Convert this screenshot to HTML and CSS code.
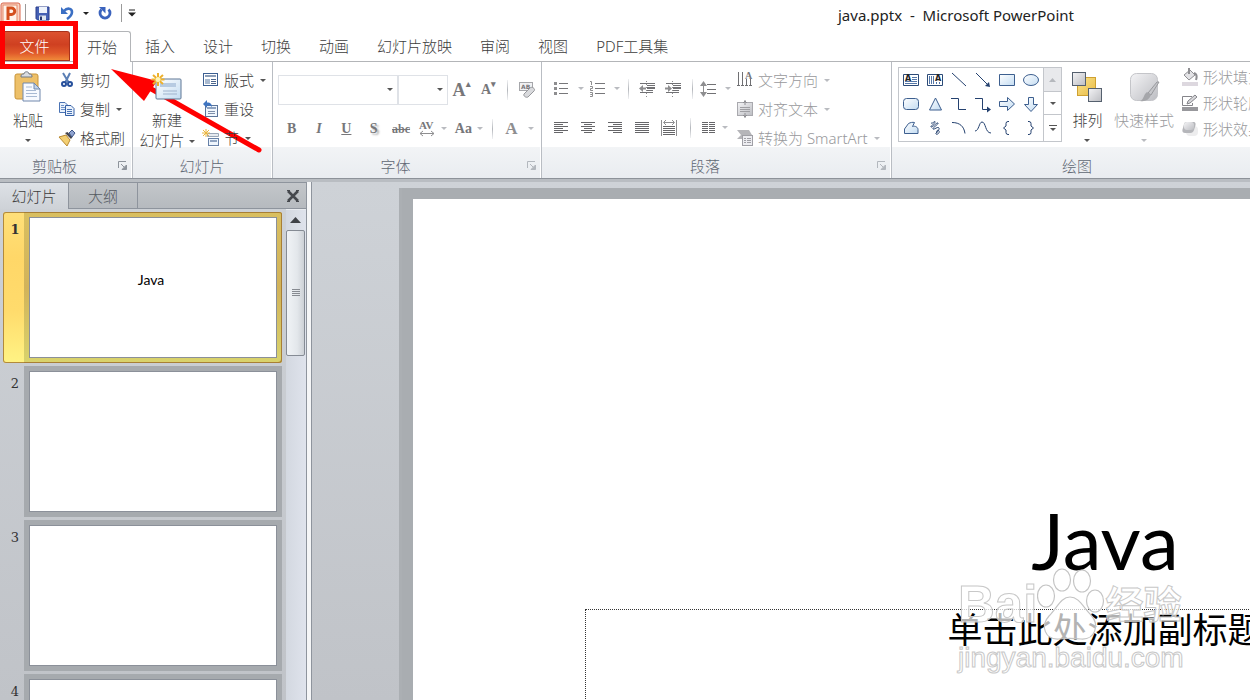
FILE: index.html
```
<!DOCTYPE html>
<html lang="zh-CN">
<head>
    <meta charset="UTF-8">
    <meta name="viewport" content="width=device-width, initial-scale=1.0">
    <title>java.pptx - Microsoft PowerPoint</title>
    <link rel="stylesheet" href="styles.css">
</head>
<body>
    <!-- shared gradients -->
    <svg class="defs" width="0" height="0" aria-hidden="true">
        <defs>
            <linearGradient id="blueFill" x1="0" y1="0" x2="1" y2="1"><stop offset="0" stop-color="#fff"/><stop offset="1" stop-color="#c3dcf2"/></linearGradient>
            <linearGradient id="greyFill" x1="0" y1="0" x2="1" y2="1"><stop offset="0" stop-color="#f4f4f6"/><stop offset="1" stop-color="#bcbdc2"/></linearGradient>
            <linearGradient id="goldFill" x1="0" y1="0" x2="1" y2="1"><stop offset="0" stop-color="#fbe48c"/><stop offset="1" stop-color="#e8ba45"/></linearGradient>
        </defs>
    </svg>

    <header class="titlebar">
        <div class="quick">
            <svg width="21" height="22" viewBox="0 0 21 22"><rect x="1" y="1" width="19" height="20" rx="2" fill="#f9d5c4" stroke="#d9654a"/><rect x="3" y="3" width="14" height="17" fill="#fff3ea" stroke="#e58a68"/><path d="M8 18V6h3.500a3.200 3.200 0 0 1 0 6.500H8" fill="none" stroke="#d4501e" stroke-width="3"/></svg>
            <span class="bar"></span>
            <button class="icon" aria-label="保存"><svg width="15" height="15" viewBox="0 0 15 15"><path d="M1 1h13v13H2.500L1 12.500z" fill="#4560b4" stroke="#2b3f8c"/><path d="M4 1h8v6H4z" fill="#eef3fb"/><path d="M4 9.500h7V14H4z" fill="#dfe5ee"/><path d="M5 10.500h2V14H5z" fill="#26366e"/></svg></button>
            <button class="icon undo" aria-label="撤消"><svg width="14" height="14" viewBox="0 0 14 14"><path d="M0 1v7h7z" fill="#3b6fc4"/><path d="M3 5C6 1.500 11 2 11 6c0 3-2 5-5 7" fill="none" stroke="#3b6fc4" stroke-width="2.600"/></svg><i class="caret dark"></i></button>
            <button class="icon" aria-label="恢复"><svg width="14" height="14" viewBox="0 0 14 14"><path d="M10.500 3.500a5 5 0 1 1-7 0" fill="none" stroke="#3b63bd" stroke-width="2.800"/><path d="M1 1h6.500v6.500z" fill="#3b63bd"/></svg></button>
            <span class="bar"></span>
            <button class="icon" aria-label="自定义快速访问工具栏"><svg width="8" height="8" viewBox="0 0 8 8"><path d="M1 1h6" stroke="#222"/><path d="M0 3.500h8L4 7.500z" fill="#222"/></svg></button>
        </div>
        <h1>java.pptx&nbsp; -&nbsp; Microsoft PowerPoint</h1>
    </header>

    <nav class="tabs">
        <button class="file">文件</button>
        <button class="tab active">开始</button>
        <button class="tab">插入</button>
        <button class="tab">设计</button>
        <button class="tab">切换</button>
        <button class="tab">动画</button>
        <button class="tab">幻灯片放映</button>
        <button class="tab">审阅</button>
        <button class="tab">视图</button>
        <button class="tab">PDF工具集</button>
    </nav>

    <div class="ribbon">
        <section class="group clipboard">
            <div class="tools">
                <button class="big">
                    <svg width="28" height="32" viewBox="0 0 28 32"><rect x="1" y="3" width="23" height="25" rx="2" fill="#edc069" stroke="#c9953b"/><path d="M7 5c0-2 2-2 3-2 0-3 5-3 5 0 1 0 3 0 3 2v1H7z" fill="#d9dce0" stroke="#737a84"/><path d="M9 12h11l6 6v12H9z" fill="#f7faff" stroke="#7088ac"/><path d="M20 12v6h6z" fill="#c2d3ea" stroke="#7088ac"/><path d="M12 16h6M12 19.500h10M12 22.500h11M12 25.500h11" stroke="#a8bad3"/></svg>
                    <span>粘贴</span><i class="caret"></i>
                </button>
                <div class="stack">
                    <button class="small"><svg width="18" height="18" viewBox="0 0 18 18"><path d="M5 2l6 10M12 2L7 12" stroke="#5b7fb5" stroke-width="2"/><circle cx="6" cy="13" r="2" fill="none" stroke="#27509c" stroke-width="2"/><circle cx="12" cy="13" r="2" fill="none" stroke="#27509c" stroke-width="2"/></svg>剪切</button>
                    <button class="small"><svg width="18" height="18" viewBox="0 0 18 18"><path d="M1.500 2.500H7l3 3v7H1.500z" fill="#eaf2fc" stroke="#4a73b4"/><path d="M3 5.500h3M3 7.500h4M3 9.500h4" stroke="#6e92c8"/><path d="M7.500 5.500H13l3 3v7H7.500z" fill="#eaf2fc" stroke="#345fa5"/><path d="M9 9.500h5M9 11.500h5M9 13.500h5" stroke="#4a73b4"/></svg>复制<i class="caret"></i></button>
                    <button class="small"><svg width="18" height="18" viewBox="0 0 18 18"><path d="M1 8l7-2 4 5-3 6z" fill="#f3cf72" stroke="#b98a32"/><path d="M7 4l6 6 1.500-2-5-5z" fill="#45454c"/><path d="M11 4l3-3 3 3-3 4z" fill="#8fa3d0" stroke="#3f5689"/></svg>格式刷</button>
                </div>
            </div>
            <footer>剪贴板<button class="launcher" aria-label="剪贴板选项"><svg width="9" height="9" viewBox="0 0 9 9"><path d="M.5 7V.5H8M3 3l3 3" fill="none" stroke="#8d939b"/><path d="M8.500 4v4.500H4z" fill="#8d939b" stroke="#8d939b"/></svg></button></footer>
        </section>

        <section class="group slides">
            <div class="tools">
                <button class="big">
                    <svg width="32" height="32" viewBox="0 0 32 32"><rect x="5" y="8" width="25" height="20" rx="1" fill="url(#blueFill)" stroke="#5f7795"/><path d="M9 12h16v4H9z" fill="#b7cbe2"/><path d="M12 20h14M12 23h14" stroke="#9fb3cd"/><path d="M7 2v13M.5 8.500h13M2 4l10 9M12 4L2 13" stroke="#eeb12c" stroke-width="2"/><circle cx="7" cy="8.500" r="2.500" fill="#fff4b5"/></svg>
                    <span>新建</span><span>幻灯片<i class="caret"></i></span>
                </button>
                <div class="stack">
                    <button class="small"><svg width="18" height="18" viewBox="0 0 18 18"><rect x="1.500" y="2.500" width="14" height="12" fill="#fff" stroke="#3c5f92"/><path d="M3 5h11" stroke="#8b9db7" stroke-width="2"/><path d="M3 8h5v5H3z" fill="#a9bad0"/><path d="M9 8.500h5M9 10.500h5M9 12.500h5" stroke="#4c668c"/></svg>版式<i class="caret"></i></button>
                    <button class="small"><svg width="18" height="18" viewBox="0 0 18 18"><rect x="3.500" y="5.500" width="12" height="11" fill="#f0f6fd" stroke="#5b7499"/><path d="M5 8h9" stroke="#8fa3c0" stroke-width="2"/><path d="M6 11.500h7M6 13.500h7" stroke="#7e8fab"/><path d="M1 4l4-4v2.500c4 0 5 2 5 5-1-2-2-2-5-2V8z" fill="#3f75c1"/></svg>重设</button>
                    <button class="small"><svg width="18" height="18" viewBox="0 0 18 18"><path d="M5.500 4.500h11v3h-11z" fill="#e6eaf0" stroke="#9aa6b7"/><rect x="6.500" y="9.500" width="10" height="7" fill="#eef5fd" stroke="#6781a8"/><path d="M8 12h7" stroke="#8fa3c0" stroke-width="2"/><path d="M4 0v8M0 4h8M1 1l6 6M7 1L1 7" stroke="#ecb63c"/></svg>节<i class="caret"></i></button>
                </div>
            </div>
            <footer>幻灯片</footer>
        </section>

        <section class="group font">
            <div class="tools">
                <div class="row">
                    <select class="family" aria-label="字体"><option></option></select>
                    <select class="size" aria-label="字号"><option></option></select>
                    <button class="glyph grow" aria-label="增大字号">A<sup>▴</sup></button>
                    <button class="glyph shrink" aria-label="减小字号">A<sup>▾</sup></button>
                    <span class="sep"></span>
                    <button class="glyph" aria-label="清除格式"><svg width="18" height="18" viewBox="0 0 18 18"><rect x="1.500" y="1.500" width="13" height="8" fill="#f1f1f3" stroke="#a5a6aa"/><text x="3" y="8" class="tiny">AB</text><path d="M6 13l6-6c2-2 6 1 4 3l-6 6c-2 1-5-1-4-3z" fill="#d9dadd" stroke="#96979b"/></svg></button>
                </div>
                <div class="row">
                    <button class="glyph bold">B</button>
                    <button class="glyph italic">I</button>
                    <button class="glyph underline">U</button>
                    <button class="glyph shadow">S</button>
                    <button class="glyph strike">abc</button>
                    <button class="glyph wide" aria-label="字符间距"><svg width="18" height="18" viewBox="0 0 18 18"><text x="1" y="9" class="av">AV</text><path d="M2 13.500h14M5 11l-3 2.500L5 16M13 11l3 2.500-3 2.500" fill="none" stroke="#8e8e90"/></svg><i class="caret pale"></i></button>
                    <button class="glyph wide">Aa<i class="caret pale"></i></button>
                    <span class="sep"></span>
                    <button class="glyph color">A<i class="caret pale"></i></button>
                </div>
            </div>
            <footer>字体<button class="launcher off" aria-label="字体选项"><svg width="9" height="9" viewBox="0 0 9 9"><path d="M.5 7V.5H8M3 3l3 3" fill="none" stroke="#8d939b"/><path d="M8.500 4v4.500H4z" fill="#8d939b" stroke="#8d939b"/></svg></button></footer>
        </section>

        <section class="group para">
            <div class="tools">
                <div class="rows">
                    <div class="row">
                        <button class="glyph list" aria-label="项目符号"><svg width="16" height="16" viewBox="0 0 16 16"><path d="M6 2.500h9M6 7.500h9M6 12.500h9" stroke="#77777a"/><path d="M1 2.500h3M1 7.500h3M1 12.500h3" stroke="#8e8e90" stroke-width="3"/></svg><i class="caret pale"></i></button>
                        <button class="glyph list" aria-label="编号"><svg width="16" height="16" viewBox="0 0 16 16"><path d="M6 2.500h10M6 7.500h10M6 12.500h10" stroke="#77777a"/><path d="M1 .5h1.500v3.500M1 5.500h2.500v2H1.500v2h2.500M1 11.500h2.500v2H1.500h2v2H1" fill="none" stroke="#8e8e90"/></svg><i class="caret pale"></i></button>
                        <span class="sep"></span>
                        <button class="glyph" aria-label="降低列表级别"><svg width="18" height="16" viewBox="0 0 18 16"><path d="M2 2.500h15M9 4.500h8M9 9.500h6M2 11.500h13" stroke="#717174"/><path d="M9 7h8" stroke="#717174" stroke-width="2"/><path d="M1 7.500l4-3.500v2.500h3v2H5V11z" fill="#8e8e90"/><path d="M8.500 0v16" stroke="#8e8e90" stroke-dasharray="1 2"/></svg></button>
                        <button class="glyph" aria-label="提高列表级别"><svg width="18" height="16" viewBox="0 0 18 16"><path d="M2 2.500h15M9 4.500h8M9 9.500h6M2 11.500h13" stroke="#717174"/><path d="M9 7h8" stroke="#717174" stroke-width="2"/><path d="M8 7.500L4 4v2.500H1v2h3V11z" fill="#8e8e90"/><path d="M8.500 0v16" stroke="#8e8e90" stroke-dasharray="1 2"/></svg></button>
                        <span class="sep"></span>
                        <button class="glyph list" aria-label="行距"><svg width="16" height="16" viewBox="0 0 16 16"><path d="M7 3.500h9M7 8.500h9M7 12.500h9" stroke="#717174"/><path d="M3.500 2v12" stroke="#8e8e90"/><path d="M0 5l3.500-5L7 5zM0 11l3.500 5L7 11z" fill="#8e8e90"/></svg><i class="caret pale"></i></button>
                    </div>
                    <div class="row">
                        <button class="glyph align" aria-label="左对齐"><svg width="16" height="16" viewBox="0 0 16 16"><path d="M1 2.500h14M1 4.500h9M1 6.500h14M1 8.500h9M1 10.500h14M1 12.500h9" stroke="#666669"/></svg></button>
                        <button class="glyph align" aria-label="居中"><svg width="16" height="16" viewBox="0 0 16 16"><path d="M1 2.500h14M4 4.500h8M1 6.500h14M4 8.500h8M1 10.500h14M4 12.500h8" stroke="#666669"/></svg></button>
                        <button class="glyph align" aria-label="右对齐"><svg width="16" height="16" viewBox="0 0 16 16"><path d="M1 2.500h14M6 4.500h9M1 6.500h14M6 8.500h9M1 10.500h14M6 12.500h9" stroke="#666669"/></svg></button>
                        <button class="glyph align" aria-label="两端对齐"><svg width="16" height="16" viewBox="0 0 16 16"><path d="M1 2.500h14M1 4.500h14M1 6.500h14M1 8.500h14M1 10.500h14M1 12.500h14" stroke="#666669"/></svg></button>
                        <button class="glyph align" aria-label="分散对齐"><svg width="16" height="16" viewBox="0 0 16 16"><path d="M.5 0v16M15.500 0v16M3 2.500h10M5 0L2.500 2.500 5 5M11 0l2.500 2.500L11 5" fill="none" stroke="#8e8e90"/><path d="M2 6.500h12M2 8.500h12M2 10.500h12M2 12.500h12M2 14.500h12" stroke="#666669"/></svg></button>
                        <span class="sep"></span>
                        <button class="glyph cols" aria-label="分栏"><svg width="16" height="16" viewBox="0 0 16 16"><path d="M1 2.500h6M1 4.500h6M1 6.500h6M1 8.500h6M1 10.500h6M1 12.500h6M8 2.500h6M8 4.500h6M8 6.500h6M8 8.500h6M8 10.500h6M8 12.500h6" stroke="#666669"/></svg><i class="caret pale"></i></button>
                    </div>
                </div>
                <div class="stack off">
                    <button class="small"><svg width="18" height="18" viewBox="0 0 18 18"><path d="M2.500 1v13M6.500 1v13M10.500 8v6M14.500 8v6" stroke="#707073"/><path d="M1 14.500h3M5 14.500h3M9 14.500h3M13 14.500h3" stroke="#707073"/><text x="9" y="8" class="mini">A</text></svg>文字方向<i class="caret pale"></i></button>
                    <button class="small"><svg width="18" height="18" viewBox="0 0 18 18"><rect x="1.500" y="2.500" width="15" height="13" fill="url(#greyFill)" stroke="#a9a9ae"/><path d="M4 7.500h10M4 9.500h10M4 11.500h10" stroke="#9f9fa3"/><path d="M9 0v5M9 13v5M7 3l2-2 2 2M7 15l2 2 2-2" fill="none" stroke="#8f8f93"/></svg>对齐文本<i class="caret pale"></i></button>
                    <button class="small"><svg width="18" height="18" viewBox="0 0 18 18"><path d="M1 1h12l3 5-2 4H1l4-4z" fill="#b5b5b9"/><rect x="6.500" y="6.500" width="10" height="10" fill="#ededf1" stroke="#a0a0a6"/><path d="M8 9.500h2M11 9.500h4M8 11.500h2M11 11.500h4M8 13.500h2M11 13.500h4" stroke="#a0a0a6"/></svg>转换为 SmartArt<i class="caret pale"></i></button>
                </div>
            </div>
            <footer>段落<button class="launcher off" aria-label="段落选项"><svg width="9" height="9" viewBox="0 0 9 9"><path d="M.5 7V.5H8M3 3l3 3" fill="none" stroke="#8d939b"/><path d="M8.500 4v4.500H4z" fill="#8d939b" stroke="#8d939b"/></svg></button></footer>
        </section>

        <section class="group drawing">
            <div class="tools">
                <div class="gallery">
                    <div class="shapes">
                        <button aria-label="文本框"><svg viewBox="0 0 24 24"><path d="M4.500 6.500h15v11h-15z" fill="#fff" stroke="#2c4a77"/><path d="M13 9.500h5M13 11.500h5M6 13.500h12M6 15.500h12" stroke="#5577a8"/><text x="6" y="13" class="box">A</text></svg></button>
                        <button aria-label="竖排文本框"><svg viewBox="0 0 24 24"><path d="M4.500 6.500h15v11h-15z" fill="#fff" stroke="#2c4a77"/><path d="M6.500 8v8M8.500 8v8M10.500 8v8M13.500 14v2M16.500 14v2" stroke="#5577a8"/><text x="12" y="13" class="box">A</text></svg></button>
                        <button aria-label="直线"><svg viewBox="0 0 24 24"><path d="M5 5l14 13" class="ln"/></svg></button>
                        <button aria-label="箭头"><svg viewBox="0 0 24 24"><path d="M5 5l12 12" class="ln"/><path d="M19 19l-5-1 4-4z" fill="#24416f"/></svg></button>
                        <button aria-label="矩形"><svg viewBox="0 0 24 24"><path d="M4.500 6.500h15v11h-15z" class="sh"/></svg></button>
                        <button aria-label="椭圆"><svg viewBox="0 0 24 24"><ellipse cx="12" cy="12" rx="7.500" ry="5.500" class="sh"/></svg></button>
                        <button aria-label="圆角矩形"><svg viewBox="0 0 24 24"><rect x="4.500" y="6.500" width="15" height="11" rx="3" class="sh"/></svg></button>
                        <button aria-label="三角形"><svg viewBox="0 0 24 24"><path d="M12.500 6l6 12h-12z" class="sh"/></svg></button>
                        <button aria-label="肘形连接符"><svg viewBox="0 0 24 24"><path d="M4 6.500h7.500v11H19" class="ln"/></svg></button>
                        <button aria-label="肘形箭头"><svg viewBox="0 0 24 24"><path d="M4 6.500h7.500v11H18" class="ln"/><path d="M20 17.500l-4-3v6z" fill="#24416f"/></svg></button>
                        <button aria-label="右箭头"><svg viewBox="0 0 24 24"><path d="M4.500 9.500h8v-4l7 6.500-7 6.500v-4h-8z" class="sh"/></svg></button>
                        <button aria-label="下箭头"><svg viewBox="0 0 24 24"><path d="M9.500 5.500h5v7h4l-6.500 7-6.500-7h4z" class="sh"/></svg></button>
                        <button aria-label="任意多边形"><svg viewBox="0 0 24 24"><path d="M5.500 17.500V13l4-5.500c2-1 4-1.500 6-1l-2 4c3-1 5.500 1 5.500 3v4z" class="sh"/></svg></button>
                        <button aria-label="自由曲线"><svg viewBox="0 0 24 24"><path d="M8 7c2 1 4-3 4-1s-5 4-4 5 6-5 7-4-6 5-5 6 5-3 6-1-4 5-3 6 4-1 3-3-3 0-2 2" class="ln"/></svg></button>
                        <button aria-label="弧形"><svg viewBox="0 0 24 24"><path d="M5 6.500c8 0 12 4 13 11" class="ln"/></svg></button>
                        <button aria-label="曲线"><svg viewBox="0 0 24 24"><path d="M4 15c4 0 4-9 7-9 4 0 3 11 9 11" class="ln"/></svg></button>
                        <button aria-label="左大括号"><svg viewBox="0 0 24 24"><path d="M14 5.500h-1q-2 0-2 2v2.500L8.500 12 11 14v2.500q0 2 2 2h1" class="ln"/></svg></button>
                        <button aria-label="右大括号"><svg viewBox="0 0 24 24"><path d="M9 5.500h1q2 0 2 2v2.500l2.500 2-2.500 2v2.500q0 2-2 2H9" class="ln"/></svg></button>
                    </div>
                    <div class="spin">
                        <button class="dim" aria-label="上一行"><svg width="7" height="4"><path d="M0 4h7L3.500 0z" fill="#b5b8bd"/></svg></button>
                        <button aria-label="下一行"><i class="caret"></i></button>
                        <button aria-label="其他"><svg width="8" height="7"><path d="M0 .5h8" stroke="#555"/><path d="M1 3h6L4 6z" fill="#555"/></svg></button>
                    </div>
                </div>
                <button class="big arrange">
                    <svg width="32" height="32" viewBox="0 0 32 32"><rect x="6.500" y="6.500" width="18" height="18" fill="url(#goldFill)" stroke="#cfa132"/><rect x="1.500" y="1.500" width="13" height="13" fill="url(#greyFill)" stroke="#55606e"/><rect x="17.500" y="17.500" width="13" height="13" fill="url(#greyFill)" stroke="#55606e"/></svg>
                    <span>排列</span><i class="caret"></i>
                </button>
                <button class="big styles off">
                    <svg width="32" height="32" viewBox="0 0 32 32"><rect x="2.500" y="2.500" width="27" height="27" rx="6" fill="url(#greyFill)" stroke="#c4c5c9"/><path d="M31 11l-8 13-3-2 9-11z" fill="#c5c6ca" stroke="#98999d"/><path d="M19 21l4 3c-2 5-6 7-11 6 4-1 3-6 7-9z" fill="#a5a6aa"/></svg>
                    <span>快速样式</span><i class="caret pale"></i>
                </button>
                <div class="stack off effects">
                    <button class="small"><svg width="18" height="18" viewBox="0 0 18 18"><path d="M3 7l6-5 5 5-6 5z" fill="#e3e3e6" stroke="#8f8f93"/><path d="M8 0v6M13 5c3 1 3 4 2 7" fill="none" stroke="#8f8f93" stroke-width="2"/><path d="M1 14h16v4H1z" fill="#ddd8df"/></svg>形状填充</button>
                    <button class="small"><svg width="18" height="18" viewBox="0 0 18 18"><path d="M11 2.500H1.500v9h10V9" fill="none" stroke="#85858a"/><path d="M6 10l1-3 7-6 2 2-7 6z" fill="#d8d8db" stroke="#85858a"/><path d="M1 13h16v4H1z" fill="#98989c"/></svg>形状轮廓</button>
                    <button class="small"><svg width="18" height="18" viewBox="0 0 18 18"><rect x="5" y="6" width="12" height="10" rx="4" fill="#ededee"/><path d="M5 2h7c3 0 3 2 2 5l-1 3c-1 3-3 3-5 3H4c-3 0-3-3-2-5l1-4c0-1 1-2 2-2z" fill="#b5b6ba"/><rect x="3" y="2" width="10" height="8" rx="3" fill="url(#greyFill)"/></svg>形状效果</button>
                </div>
            </div>
            <footer>绘图</footer>
        </section>
    </div>

    <div class="workspace">
        <aside class="panel">
            <div class="panel-tabs">
                <button class="panel-tab current">幻灯片</button>
                <button class="panel-tab">大纲</button>
                <button class="close" aria-label="关闭"><svg width="14" height="14" viewBox="0 0 14 14"><path d="M2 2l10 10M12 2L2 12" stroke="#45484d" stroke-width="2.600"/><path d="M1 1.500h3M10 1.500h3M1 12.500h3M10 12.500h3" stroke="#45484d"/></svg></button>
            </div>
            <div class="panel-body">
                <ol class="thumbs">
                    <li class="selected"><span class="num">1</span><div class="frame"><div class="thumb">Java</div></div></li>
                    <li><span class="num">2</span><div class="frame"><div class="thumb"></div></div></li>
                    <li><span class="num">3</span><div class="frame"><div class="thumb"></div></div></li>
                    <li><span class="num">4</span><div class="frame"><div class="thumb"></div></div></li>
                </ol>
                <div class="scrollbar">
                    <button class="up" aria-label="向上滚动"><svg width="11" height="6"><path d="M0 6h11L5.500 0z" fill="#3f4247"/></svg></button>
                    <div class="grip"><svg width="8" height="8"><path d="M0 .5h8M0 2.500h8M0 4.500h8M0 6.500h8" stroke="#868a91"/></svg></div>
                </div>
            </div>
        </aside>

        <main class="stage">
            <div class="slide">
                <h2>Java</h2>
                <p class="subtitle">单击此处添加副标题</p>
            </div>
        </main>
    </div>

    <!-- watermark and callout lie over the window -->
    <div class="watermark">
        <div class="brand"><span>Bai</span>
            <svg width="68" height="74" viewBox="0 0 68 74"><g fill="#fff" fill-opacity=".7" stroke="#c4c4c4" stroke-width="1.200"><ellipse cx="9" cy="28" rx="8.500" ry="11"/><ellipse cx="25" cy="12" rx="8.500" ry="11"/><ellipse cx="45" cy="13" rx="8.500" ry="11"/><ellipse cx="58" cy="33" rx="8.500" ry="11"/><path d="M33 29c9 0 13 10 21 18 9 10 4 25-10 24-8-1-14-1-22 0C8 72 3 58 12 48c8-8 12-19 21-19z"/></g></svg>
            <span class="cn">经验</span></div>
        <div class="site">jingyan.baidu.com</div>
    </div>
    <div class="callout-box"></div>
    <svg class="callout-arrow" width="152" height="86" viewBox="0 0 152 86"><path d="M35 17l113 64" stroke="#f00" stroke-width="5" stroke-linecap="round"/><path d="M0 0l46 12-13 20z" fill="#f00"/></svg>
</body>
</html>
```
FILE: styles.css
```
* {
    box-sizing: border-box;
}
body {
    margin: 0;
    height: 100vh;
    display: flex;
    flex-direction: column;
    overflow: hidden;
    position: relative;
    font-family: "Noto Sans", "Noto Sans CJK SC", sans-serif;
    font-size: 15px;
    font-weight: 300;
    line-height: 18px;
    color: #3c3c3c;
    background: #fff;
}
button {
    font: inherit;
    color: inherit;
    background: none;
    border: 0;
    padding: 0;
    margin: 0;
    white-space: nowrap;
    cursor: pointer;
}
svg {
    display: block;
    flex: none;
}
.defs {
    position: absolute;
}
.caret {
    display: inline-block;
    flex: none;
    border: 3px solid transparent;
    border-top-color: #555;
    border-bottom: 0;
}
.caret.dark {
    border-top-color: #222;
}
.caret.pale {
    border-top-color: #b9bbc0;
}

/* title bar */
.titlebar {
    height: 31px;
    flex: none;
    display: flex;
    align-items: flex-start;
}
.quick {
    width: 838px;
    height: 26px;
    flex: none;
    display: flex;
    align-items: center;
    gap: 9px;
}
.quick .icon {
    display: flex;
    align-items: center;
    gap: 8px;
}
.quick .undo {
    margin-left: 2px;
}
.quick .bar {
    width: 1px;
    height: 18px;
    margin-left: -5px;
    background: #9a9a9a;
}
.quick .icon + .bar {
    margin-left: 0;
    margin-right: -3px;
}
.titlebar h1 {
    margin: 0;
    padding-top: 5px;
    font-size: 15px;
    font-weight: 400;
    line-height: 20px;
    color: #222;
    white-space: nowrap;
}

/* ribbon tabs */
.tabs {
    height: 31px;
    flex: none;
    display: flex;
    border-bottom: 1px solid #b3b5b8;
}
.tab {
    padding: 0 14px;
}
.file {
    width: 70px;
    margin-right: 3px;
    color: #fff;
    border: 1px solid #a8321c;
    border-left: 0;
    border-radius: 0 3px 0 0;
    background: linear-gradient(#dc5230, #cf4021 45%, #e0592a 75%, #f08a3a);
}
.tab.active {
    height: 31px;
    padding: 0 13px 1px;
    border: 1px solid #b3b5b8;
    border-bottom: 0;
    border-radius: 3px 3px 0 0;
    background: #fff;
}

/* ribbon */
.ribbon {
    flex: none;
    display: flex;
    overflow: hidden;
    border-bottom: 1px solid #8d9299;
}
.group {
    flex: none;
    height: 116px;
    display: flex;
    flex-direction: column;
    border-right: 1px solid #b9bdc3;
}
.clipboard { width: 133px; }
.slides { width: 140px; }
.font { width: 269px; }
.para { width: 350px; }
.drawing { width: 372px; }
.tools {
    height: 85px;
    flex: none;
    display: flex;
    padding-top: 9px;
    position: relative;
    z-index: 1;
}
.group footer {
    flex: 1;
    display: flex;
    justify-content: center;
    align-items: center;
    position: relative;
    padding: 6px 22px 0 0;
    margin-right: 1px;
    color: #5f6773;
    background: linear-gradient(#f2f4f6, #e9ecf0);
}
.slides footer,
.drawing footer {
    padding-right: 0;
}
.launcher {
    position: absolute;
    right: 4px;
    bottom: 8px;
}
.launcher.off {
    opacity: .6;
}
.big {
    display: flex;
    flex-direction: column;
    align-items: center;
    height: 76px;
    line-height: 20px;
}
.big svg {
    margin-bottom: 7px;
}
.big > .caret {
    margin-top: 9px;
}
.big span .caret {
    margin: 0 0 3px 4px;
}
.clipboard .big {
    width: 56px;
}
.slides .big {
    width: 66px;
    margin-left: 1px;
}
.arrange { width: 55px; }
.styles {
    width: 62px;
    margin-left: 1px;
}
.stack {
    display: flex;
    flex-direction: column;
    gap: 11px;
    margin-left: 2px;
}
.small {
    height: 18px;
    display: flex;
    align-items: center;
    gap: 4px;
    line-height: 18px;
}
.small .caret {
    margin-left: 2px;
}
.big.off,
.stack.off {
    color: #98999c;
}
.effects {
    gap: 8px;
    margin-top: -3px;
    margin-left: 7px;
}

/* font and paragraph tools */
.font .tools {
    flex-direction: column;
    padding-top: 13px;
    padding-left: 5px;
    gap: 10px;
}
.row {
    height: 29px;
    display: flex;
    align-items: center;
}
select {
    appearance: none;
    height: 30px;
    border: 1px solid #dfe2e7;
    border-radius: 0;
    background: #fff url("data:image/svg+xml,%3Csvg xmlns='http://www.w3.org/2000/svg' width='6' height='3'%3E%3Cpath d='M0 0h6L3 3z' fill='%23555'/%3E%3C/svg%3E") no-repeat right 4px center;
}
.family { width: 120px; }
.size { width: 50px; }
.glyph {
    width: 27px;
    height: 22px;
    display: flex;
    align-items: center;
    justify-content: center;
    gap: 5px;
    font-family: "Liberation Serif", serif;
    font-size: 14px;
    font-weight: bold;
    color: #77777a;
}
.row .glyph.wide { width: 37px; }
.row .glyph.color {
    width: 44px;
    gap: 10px;
    font-size: 17px;
    color: #8e8e90;
}
.bold, .italic, .underline, .shadow, .strike { width: 28px; }
.row .grow { font-size: 18px; }
.row .shrink { font-size: 14px; }
.glyph sup {
    margin: 0 0 10px -5px;
    font-size: 9px;
    line-height: 9px;
}
.italic { font-style: italic; }
.underline { text-decoration: underline; }
.shadow { text-shadow: 2px 2px 2px #aaa; }
.row .strike {
    font-size: 12px;
    text-decoration: line-through;
}
.sep {
    width: 1px;
    height: 20px;
    margin: 0 5px;
    background: linear-gradient(#f0f1f3, #b4b7bc, #f0f1f3);
}
.tiny { font: bold 6px "DejaVu Sans", sans-serif; fill: #77777a; }
.av { font: bold 11px "Liberation Serif", serif; fill: #77777a; }
.mini { font: bold 10px "Liberation Serif", serif; fill: #77777a; }
.box { font: bold 8px "DejaVu Sans", sans-serif; fill: #222; }
.rows {
    width: 192px;
    padding: 3px 0 0 8px;
    display: flex;
    flex-direction: column;
    gap: 10px;
}
.list { width: 37px; gap: 9px; }
.align {
    width: 27px;
    justify-content: flex-start;
    padding-left: 3px;
}
.cols { width: 36px; }

/* shape gallery */
.gallery {
    display: flex;
    width: 165px;
    height: 75px;
    margin-left: 6px;
    margin-top: -4px;
    border: 1px solid #c3c6cb;
}
.shapes {
    flex: 1;
    display: grid;
    grid-template-columns: repeat(6, 24px);
    grid-auto-rows: 24px;
}
.shapes svg {
    width: 24px;
    height: 24px;
}
.ln {
    fill: none;
    stroke: #24416f;
}
.sh {
    fill: url(#blueFill);
    stroke: #3d5f8f;
}
.spin {
    width: 18px;
    display: grid;
    border-left: 1px solid #c3c6cb;
}
.spin button {
    display: flex;
    align-items: center;
    justify-content: center;
    border-bottom: 1px solid #c3c6cb;
}
.spin button:last-child {
    border-bottom: 0;
}
.spin .dim {
    background: #e8e9ec;
}

/* work area */
.workspace {
    flex: 1;
    min-height: 0;
    display: flex;
    border-top: 3px solid #b9bdc2;
    background: linear-gradient(#ced2d7, #c0c3c8);
}
.panel {
    width: 312px;
    flex: none;
    display: flex;
    flex-direction: column;
    border-right: 1px solid #8e949d;
    box-shadow: inset -4px 0 #f5f6f7, inset -5px 0 #8e949d;
    padding-right: 5px;
}
.panel-tabs {
    height: 27px;
    flex: none;
    display: flex;
    border-top: 1px solid #8e949d;
    background: linear-gradient(#c3c6ca, #b5b9be);
}
.panel-tab {
    width: 69px;
    border-right: 1px solid #8e949d;
    border-bottom: 1px solid #8e949d;
    color: #555a61;
}
.panel-tab.current {
    border-bottom: 0;
    color: #3c3c3c;
    background: linear-gradient(#dde1e6, #ced2d7);
}
.close {
    flex: 1;
    display: flex;
    align-items: center;
    justify-content: flex-end;
    padding-right: 6px;
    border-bottom: 1px solid #8e949d;
}
.panel-body {
    flex: 1;
    min-height: 0;
    display: flex;
    overflow: hidden;
}
.thumbs {
    flex: 1;
    margin: 0;
    padding: 3px 4px 0 3px;
    list-style: none;
}
.thumbs li {
    height: 151px;
    margin-bottom: 3px;
    display: flex;
}
.num {
    width: 21px;
    padding: 9px 0 0 3px;
    text-align: center;
    font-family: "DejaVu Serif", serif;
    font-size: 13px;
    font-weight: 400;
    color: #333;
}
.frame {
    flex: 1;
    padding: 5px;
    background: #a6aaae;
}
.thumb {
    height: 141px;
    display: flex;
    align-items: center;
    justify-content: center;
    padding-bottom: 16px;
    padding-right: 4px;
    border: 1px solid #8b9099;
    background: #fff;
    color: #000;
    font-family: Lato, sans-serif;
    font-size: 14px;
    font-weight: 400;
}
.selected {
    border-radius: 3px;
    box-shadow: inset 0 0 0 1px #b28a3c;
    background: linear-gradient(#ffe07a, #ffd768 30%, #ffdb6c 65%, #fff384);
}
.selected .num {
    font-weight: bold;
}
.selected .frame {
    border-radius: 0 3px 3px 0;
    box-shadow: inset 0 1px #a87f35, inset -1px -1px #a87f35;
    background: linear-gradient(#d9bf60, #d2b35a 50%, #d9d36c);
}
.scrollbar {
    width: 20px;
    padding-right: 1px;
    border-top: 1px solid #e8ebef;
    background: linear-gradient(90deg, #d3d8e0, #dfe3ec);
}
.up {
    width: 19px;
    height: 20px;
    display: flex;
    align-items: center;
    justify-content: center;
}
.grip {
    height: 126px;
    display: flex;
    align-items: center;
    justify-content: center;
    border: 1px solid #858b94;
    border-radius: 2px;
    background: linear-gradient(90deg, #f0f3f6, #e3e7eb 60%, #cdd1d6);
}

.stage {
    flex: 1;
    min-width: 0;
    overflow: hidden;
    padding: 17px 0 0 101px;
}
.slide {
    width: 1384px;
    height: 1038px;
    padding-top: 295px;
    background: #fff;
    box-shadow: 0 0 0 11px #a9adb1, -3px 0 0 11px #abafb3;
    color: #000;
    text-align: center;
    font-weight: 400;
}
.slide h2 {
    margin: 0;
    font-family: Lato, sans-serif;
    font-size: 78px;
    font-weight: 400;
    line-height: 92px;
}
.subtitle {
    width: 1040px;
    height: 400px;
    margin: 23px auto 0;
    border: 1px dotted #333;
    font-size: 35px;
    line-height: 40px;
}

/* watermark */
.watermark {
    position: absolute;
    left: 958px;
    top: 567px;
    color: rgba(255, 255, 255, .7);
    -webkit-text-stroke: 1px #c8c8c8;
}
.brand {
    height: 76px;
    display: flex;
    align-items: center;
    font: bold 51px/56px "Liberation Sans", "Noto Sans CJK SC", sans-serif;
}
.brand .cn {
    font-size: 38px;
}
.site {
    font: 28px/30px "Liberation Sans", sans-serif;
}

/* callout */
.callout-box {
    position: absolute;
    left: 0;
    top: 21px;
    width: 78px;
    height: 48px;
    border: 5px solid #f00;
}
.callout-arrow {
    position: absolute;
    left: 111px;
    top: 69px;
}
```
